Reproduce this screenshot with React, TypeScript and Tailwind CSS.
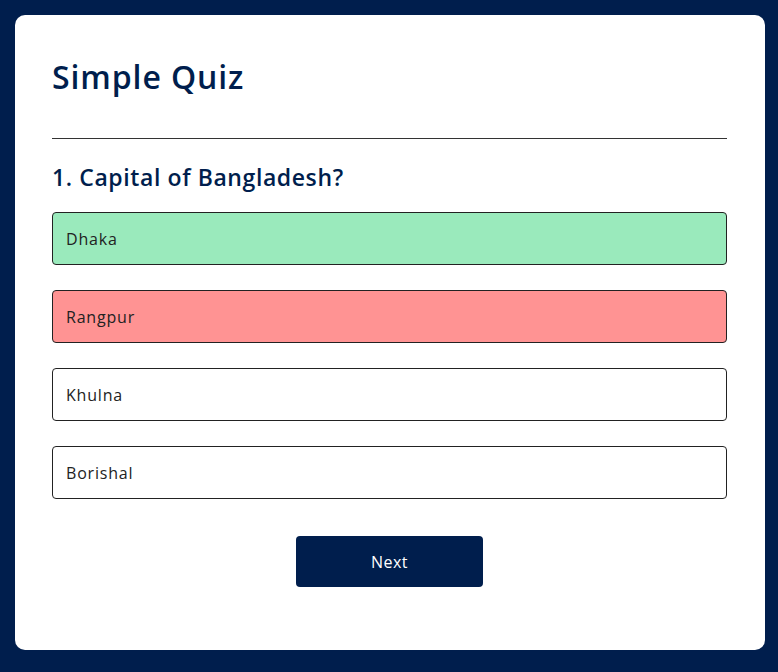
const options = [
  { label: "Dhaka", tone: "bg-[#9aeabc]" },
  { label: "Rangpur", tone: "bg-[#ff9393]" },
  { label: "Khulna", tone: "bg-white" },
  { label: "Borishal", tone: "bg-white" },
];

export default function App() {
  return (
    <div
      className="min-h-screen bg-[#001e4d] pt-[15px] pl-[15px]"
      style={{ fontFamily: '"Open Sans", Inter, sans-serif' }}
    >
      <div className="w-[750px] h-[635px] rounded-[10px] bg-white pl-[37px] pr-[38px] pt-[37px]">
        <h1 className="box-content h-[49px] border-b border-[#333] pb-[37px] text-[32px] font-[550] leading-[49px] tracking-[0.9px] text-[#001e4d]">
          Simple Quiz
        </h1>
        <div className="pt-[23px]">
          <h2 className="text-[23px] font-semibold leading-[30px] tracking-[0.6px] text-[#001e4d]">
            1. Capital of Bangladesh?
          </h2>
          <div className="mt-[20px] flex flex-col gap-[25px]">
            {options.map((o) => (
              <button
                key={o.label}
                className={`flex h-[53px] w-full items-center rounded-[4px] border border-[#222] px-[13px] text-left text-[16px] tracking-[0.8px] text-[#222] ${o.tone}`}
              >
                {o.label}
              </button>
            ))}
          </div>
          <div className="mt-[37px] flex justify-center">
            <button className="h-[51px] w-[187px] rounded-[4px] bg-[#001e4d] text-[16px] tracking-[0.5px] text-white">
              Next
            </button>
          </div>
        </div>
      </div>
    </div>
  );
}
